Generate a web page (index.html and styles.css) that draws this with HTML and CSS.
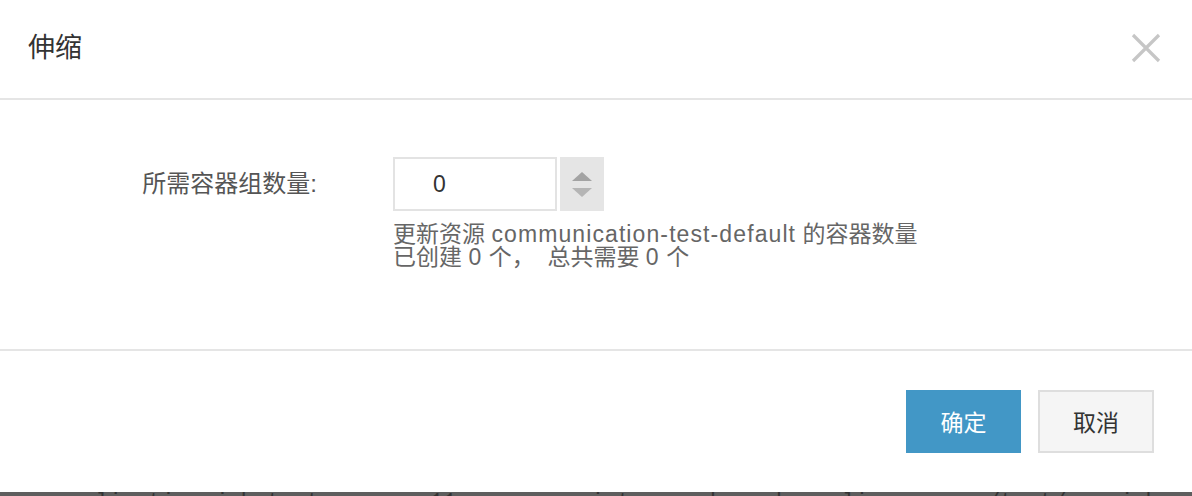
FILE: index.html
```html
<!DOCTYPE html>
<html lang="zh-CN">
<head>
<meta charset="utf-8">
<link rel="stylesheet" href="styles.css">
</head>
<body>
<div class="modal">
  <div class="modal-header">
    <h1 class="modal-title">伸缩</h1>
    <button class="close-btn" aria-label="关闭">
      <svg width="30" height="30" viewBox="0 0 30 30"><path d="M2 2 L28 28 M28 2 L2 28" stroke="#c6c6c6" stroke-width="3.2" stroke-linecap="butt" fill="none"/></svg>
    </button>
  </div>
  <div class="modal-body">
    <div class="form-row">
      <label class="form-label">所需容器组数量<span class="latin">:</span></label>
      <div class="form-control">
        <div class="number-input">
          <div class="number-field">0</div>
          <div class="spinner">
            <span class="arrow arrow-up"></span>
            <span class="arrow arrow-down"></span>
          </div>
        </div>
        <div class="help-text">
          <div class="help-line">更新资源 <span class="latin">communication-test-default</span> 的容器数量</div>
          <div class="help-line">已创建 <span class="latin">0</span> 个，&nbsp;&nbsp;总共需要 <span class="latin">0</span> 个</div>
        </div>
      </div>
    </div>
  </div>
  <div class="modal-footer">
    <button class="btn btn-primary">确定</button>
    <button class="btn btn-default">取消</button>
  </div>
</div>
<div class="backdrop-strip">
  <span class="bg-text t1">application-job-test</span>
  <span class="bg-text t2">11</span>
  <span class="bg-text t3">registry.cn-hangzhou.aliyuncs.com/test/app:job</span>
</div>
</body>
</html>
```

FILE: styles.css
```css
* { box-sizing: border-box; }
html, body { margin: 0; padding: 0; }
body {
  width: 1192px;
  height: 496px;
  overflow: hidden;
  background: #fff;
  font-family: "Liberation Sans", "Noto Sans CJK SC", sans-serif;
}
.latin {
  letter-spacing: 1.1px;
}
.modal {
  height: 492px;
  display: flex;
  flex-direction: column;
  background: #fff;
}
.modal-header {
  height: 100px;
  border-bottom: 2px solid #e5e5e5;
  display: flex;
  align-items: center;
  justify-content: space-between;
  padding: 0 31px 2px 28px;
}
.modal-title {
  margin: 0;
  font-size: 27px;
  font-weight: normal;
  color: #333;
  line-height: 32px;
}
.close-btn {
  border: none;
  background: none;
  padding: 0;
  width: 30px;
  height: 30px;
  display: flex;
}
.modal-body {
  height: 251px;
  border-bottom: 2px solid #e5e5e5;
  padding-top: 57px;
}
.form-row {
  display: flex;
  align-items: flex-start;
}
.form-label {
  width: 320px;
  text-align: right;
  font-size: 24px;
  color: #555;
  line-height: 54px;
  padding-right: 2px;
}
.form-control {
  margin-left: 73px;
}
.number-input {
  display: flex;
  gap: 3px;
}
.number-field {
  width: 164px;
  height: 54px;
  border: 2px solid #e3e3e3;
  font-size: 23px;
  color: #333;
  line-height: 50px;
  padding-left: 38px;
}
.spinner {
  width: 44px;
  height: 54px;
  background: #e5e5e5;
  display: flex;
  flex-direction: column;
  align-items: center;
  justify-content: center;
  gap: 7px;
}
.arrow {
  width: 0;
  height: 0;
  border-left: 10px solid transparent;
  border-right: 10px solid transparent;
}
.arrow-up { border-bottom: 9px solid #a3a3a3; }
.arrow-down { border-top: 9px solid #b5b5b5; }
.help-text {
  margin-top: 12px;
  font-size: 23px;
  color: #666;
}
.help-line {
  line-height: 23px;
}
.modal-footer {
  flex: 1;
  display: flex;
  justify-content: flex-end;
  align-items: flex-start;
  gap: 17px;
  padding: 39px 38px 0 0;
}
.btn {
  height: 63px;
  font-family: "Liberation Sans", "Noto Sans CJK SC", sans-serif;
  font-size: 23px;
  padding: 0 0 2px;
  cursor: pointer;
}
.btn-primary {
  width: 115px;
  background: #4297c6;
  color: #fff;
  border: none;
}
.btn-default {
  width: 116px;
  background: #f5f5f5;
  color: #333;
  border: 2px solid #dedede;
}
.backdrop-strip {
  height: 4px;
  background: #5e5e5e;
  overflow: hidden;
  display: flex;
  white-space: nowrap;
}
.bg-text {
  font-family: "Liberation Mono", monospace;
  font-size: 22px;
  line-height: 22px;
  color: #333;
}
.t1 { margin-left: 56px; }
.t2 { margin-left: 110px; }
.t3 { margin-left: 95px; }
```
